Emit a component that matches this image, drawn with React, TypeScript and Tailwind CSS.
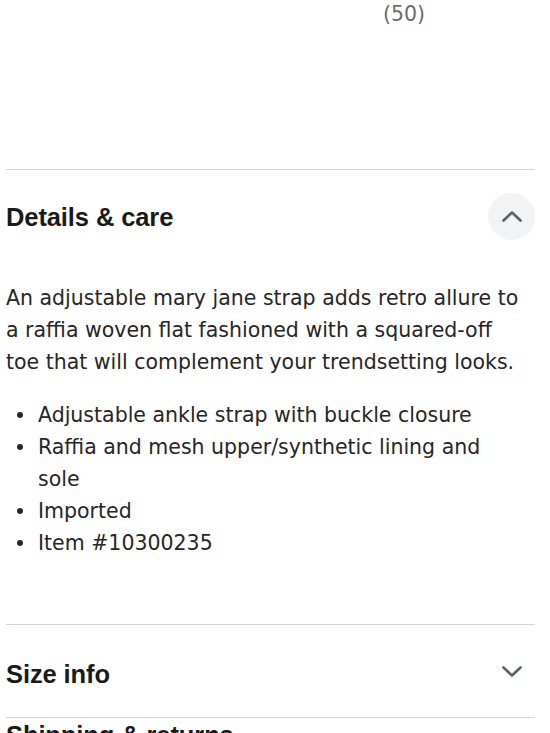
import React from "react";

const body = "font-['DejaVu_Sans',sans-serif] text-[20.5px] leading-[32px] text-[#262626]";
const head = "font-['Liberation_Sans',Arial,sans-serif] font-bold text-[25.5px] leading-[30px] tracking-[-0.1px] text-[#1a1a1a]";

function Chevron({ up }: { up?: boolean }) {
    return (
        <svg width="20" height="11" viewBox="0 0 20 11" fill="none">
            <path
                d={up ? "M1.5 9.5 L10 1.5 L18.5 9.5" : "M1.5 1.5 L10 9.5 L18.5 1.5"}
                stroke="#5c6166"
                strokeWidth="2.6"
                strokeLinecap="round"
                strokeLinejoin="round"
            />
        </svg>
    );
}

const bullets = [
    "Adjustable ankle strap with buckle closure",
    "Raffia and mesh upper/synthetic lining and sole",
    "Imported",
    "Item #10300235",
];

export default function App() {
    return (
        <div className="w-[550px] h-[733px] overflow-hidden bg-white pl-[6px] pr-[15px]">
            <div className="h-[169px] pl-[377px]">
                <span className="font-['DejaVu_Sans',sans-serif] text-[20.5px] leading-[28px] text-[#6b6b6b]">(50)</span>
            </div>
            <div className="border-t border-[#d2d4d7]" />

            <div className="flex items-center justify-between pt-[23px] pb-[42px]">
                <h2 className={head}>Details &amp; care</h2>
                <button className="w-[47px] h-[47px] rounded-full bg-[#f1f3f5] flex items-center justify-center">
                    <Chevron up />
                </button>
            </div>

            <p className={`max-w-[522px] ${body}`}>
                An adjustable mary jane strap adds retro allure to a raffia woven flat fashioned with a squared-off toe that will complement your trendsetting looks.
            </p>

            <ul className={`mt-[21px] ${body}`}>
                {bullets.map((b) => (
                    <li key={b} className="flex">
                        <span className="w-[32px] h-[32px] shrink-0 flex items-center pl-[11px]">
                            <span className="w-[6px] h-[6px] rounded-full bg-[#262626]" />
                        </span>
                        <span className="max-w-[480px]">{b}</span>
                    </li>
                ))}
            </ul>

            <div className="mt-[65px] border-t border-[#d2d4d7]" />
            <div className="h-[92px] flex items-center justify-between">
                <h2 className={`${head} mt-[6px]`}>Size info</h2>
                <span className="w-[47px] flex justify-center">
                    <Chevron />
                </span>
            </div>
            <div className="border-t border-[#d2d4d7]" />
            <div className="pt-[2px]">
                <h2 className={head}>Shipping &amp; returns</h2>
            </div>
        </div>
    );
}
